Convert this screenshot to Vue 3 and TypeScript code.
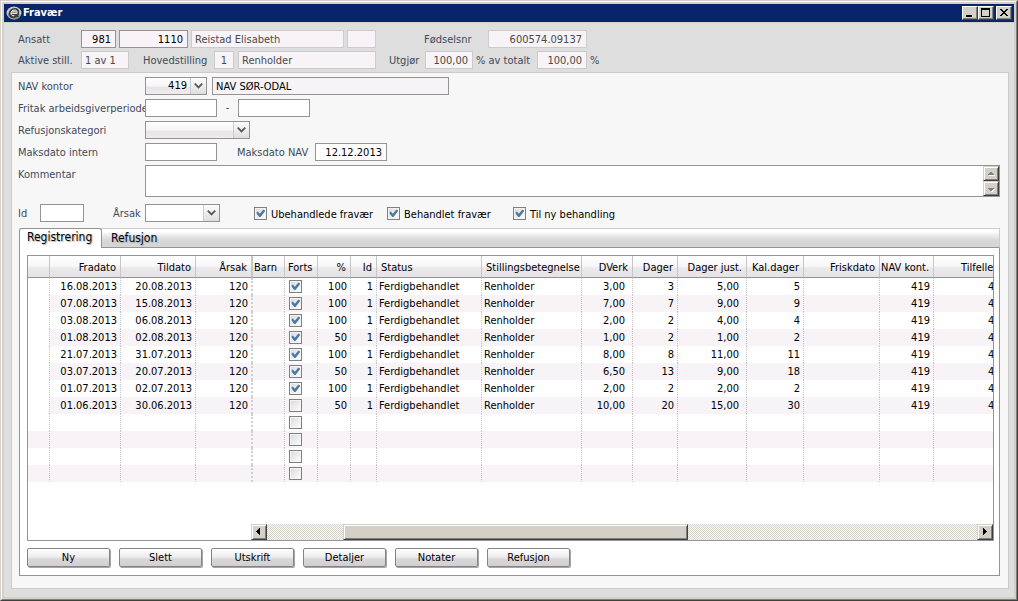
<script setup lang="ts">
import { ref } from 'vue'

interface Column {
  key: string
  label: string
  width: number | null
  kind: string
}

const columns: Column[] = [
  { key: 'mark', label: '', width: 22, kind: 'mark' },
  { key: 'from', label: 'Fradato', width: 71, kind: 'num' },
  { key: 'to', label: 'Tildato', width: 75, kind: 'num' },
  { key: 'cause', label: 'Årsak', width: 57, kind: 'num split' },
  { key: 'child', label: 'Barn', width: 32, kind: 'text tight' },
  { key: 'cont', label: 'Forts', width: 33, kind: 'check' },
  { key: 'pct', label: '%', width: 33, kind: 'num' },
  { key: 'id', label: 'Id', width: 26, kind: 'num' },
  { key: 'status', label: 'Status', width: 105, kind: 'text' },
  { key: 'position', label: 'Stillingsbetegnelse', width: 100, kind: 'text' },
  { key: 'dwork', label: 'DVerk', width: 51, kind: 'num dec' },
  { key: 'days', label: 'Dager', width: 45, kind: 'num' },
  { key: 'adjusted', label: 'Dager just.', width: 69, kind: 'num dec' },
  { key: 'calendar', label: 'Kal.dager', width: 57, kind: 'num' },
  { key: 'well', label: 'Friskdato', width: 76, kind: 'num' },
  { key: 'office', label: 'NAV kont.', width: 54, kind: 'num' },
  { key: 'cases', label: 'Tilfelle', width: null, kind: 'cut' },
]

type Row = Record<string, string>

const source: string[][] = [
  ['16.08.2013', '20.08.2013', 'x', '100', '3,00', '3', '5,00', '5'],
  ['07.08.2013', '15.08.2013', 'x', '100', '7,00', '7', '9,00', '9'],
  ['03.08.2013', '06.08.2013', 'x', '100', '2,00', '2', '4,00', '4'],
  ['01.08.2013', '02.08.2013', 'x', '50', '1,00', '2', '1,00', '2'],
  ['21.07.2013', '31.07.2013', 'x', '100', '8,00', '8', '11,00', '11'],
  ['03.07.2013', '20.07.2013', 'x', '50', '6,50', '13', '9,00', '18'],
  ['01.07.2013', '02.07.2013', 'x', '100', '2,00', '2', '2,00', '2'],
  ['01.06.2013', '30.06.2013', '', '50', '10,00', '20', '15,00', '30'],
]

const filled: Row[] = source.map((r) => ({
  from: r[0], to: r[1], cause: '120', cont: r[2], pct: r[3], id: '1',
  status: 'Ferdigbehandlet', position: 'Renholder',
  dwork: r[4], days: r[5], adjusted: r[6], calendar: r[7],
  office: '419', cases: '4',
}))
const rows = ref<Row[]>([...filled, {}, {}, {}, {}])

const actions = ['Ny', 'Slett', 'Utskrift', 'Detaljer', 'Notater', 'Refusjon']
const filters = ['Ubehandlede fravær', 'Behandlet fravær', 'Til ny behandling']
const tabs = ['Registrering', 'Refusjon']
const activeTab = ref('Registrering')
</script>

<template>
  <div class="window">
    <div class="frame">
      <header class="titlebar">
        <svg class="logo" viewBox="0 0 16 14" aria-hidden="true">
          <ellipse cx="8" cy="7" rx="7.5" ry="6.5" fill="#c9c9c9" />
          <path d="M14.500 8.500C13 12 10 12.800 7.500 12.500C4.500 12.200 2.500 10 2.500 7.500" fill="none" stroke="#8a8a8a" stroke-width="1.2" />
          <path d="M4.600 7.800H11.800C12.800 4.200 10.600 3.200 8.600 3.200C5.600 3.200 4 5.400 4 7.400C4 10 6 10.900 8 10.700C9.800 10.600 11 10.100 12.400 9.400" fill="none" stroke="#3c3c3c" stroke-width="2.6" />
          <path d="M5 7.400H11C11.600 4.800 10 4 8.600 4C6.200 4 5 5.600 5 7.400C5 9.200 6.400 9.900 8 9.800" fill="none" stroke="#f4f4f4" stroke-width="1" />
        </svg>
        <h1>Fravær</h1>
        <div class="winbuttons">
          <button type="button" class="bevel" aria-label="Minimer">
            <svg viewBox="0 0 12 10" shape-rendering="crispEdges"><rect x="2" y="7" width="6" height="2" /></svg>
          </button>
          <button type="button" class="bevel" aria-label="Maksimer">
            <svg viewBox="0 0 12 10" shape-rendering="crispEdges"><path d="M1 0h9v9H1zM2 2v6h7V2z" fill-rule="evenodd" /></svg>
          </button>
          <button type="button" class="bevel close" aria-label="Lukk">
            <svg viewBox="0 0 12 10" shape-rendering="crispEdges"><path d="M2 1h2v1h1v1h2V2h1V1h2v1H9v1H8v1H7v1h1v1h1v1h1v1H8V7H7V6H5v1H4v1H2V7h1V6h1V5h1V4H4V3H3V2H2z" /></svg>
          </button>
        </div>
      </header>

      <main class="body">
        <section class="employee">
          <div class="line">
            <label class="w-label" for="emp">Ansatt</label>
            <input id="emp" class="field own w-35 right" value="981" readonly>
            <input class="field own w-69 right" value="1110" aria-label="Ansattnummer" readonly>
            <input class="field w-153" value="Reistad Elisabeth" aria-label="Navn" readonly>
            <input class="field w-29" value="" aria-label="Kode" readonly>
            <label class="w-birth" for="birth">Fødselsnr</label>
            <input id="birth" class="field w-99 right" value="600574.09137" readonly>
          </div>
          <div class="line">
            <label class="w-label" for="active">Aktive still.</label>
            <input id="active" class="field w-48" value="1 av 1" readonly>
            <label class="w-main" for="main">Hovedstilling</label>
            <input id="main" class="field w-20 center" value="1" readonly>
            <input class="field w-138" value="Renholder" aria-label="Stilling" readonly>
            <label class="w-share" for="share">Utgjør</label>
            <input id="share" class="field w-48 right" value="100,00" readonly>
            <label class="w-total" for="total">% av totalt</label>
            <input id="total" class="field w-50 right" value="100,00" readonly>
            <span class="unit">%</span>
          </div>
        </section>

        <section class="panel">
          <form class="form" @submit.prevent>
            <label for="office">NAV kontor</label>
            <div class="cells">
              <span class="combo w-62 shaded">
                <select id="office" class="right"><option>419</option></select>
                <svg class="arrow" viewBox="0 0 16 16"><path d="M4 5.500L8 9.500L12 5.500" /></svg>
              </span>
              <input class="field own w-237" value="NAV SØR-ODAL" aria-label="NAV kontor navn" readonly>
            </div>

            <label for="exempt">Fritak arbeidsgiverperiode</label>
            <div class="cells">
              <input id="exempt" class="field edit w-72">
              <span class="dash">-</span>
              <input class="field edit w-72" aria-label="Fritak til">
            </div>

            <label for="category">Refusjonskategori</label>
            <div class="cells">
              <span class="combo w-105 shaded">
                <select id="category"><option></option></select>
                <svg class="arrow" viewBox="0 0 16 16"><path d="M4 5.500L8 9.500L12 5.500" /></svg>
              </span>
            </div>

            <label for="maxint">Maksdato intern</label>
            <div class="cells">
              <input id="maxint" class="field edit w-72">
              <label class="w-max" for="maxnav">Maksdato NAV</label>
              <input id="maxnav" class="field edit w-72 right" value="12.12.2013">
            </div>

            <label for="comment">Kommentar</label>
            <div class="comment">
              <textarea id="comment"></textarea>
              <div class="spin">
                <button type="button" class="bevel" aria-label="Rull opp"><svg viewBox="0 0 12 11" shape-rendering="crispEdges"><path d="M5 4h2v1h1v1h1v1H3V6h1V5h1z" fill="#808080" /><path d="M4 7h6v1H4z" fill="#fff" /></svg></button>
                <button type="button" class="bevel" aria-label="Rull ned"><svg viewBox="0 0 12 11" shape-rendering="crispEdges"><path d="M4 6h6v1H9v1H8v1H6V8H5V7H4z" fill="#fff" /><path d="M3 5h6v1H8v1H7v1H5V7H4V6H3z" fill="#808080" /></svg></button>
              </div>
            </div>
          </form>

          <div class="filters">
            <label class="w-id" for="fid">Id</label>
            <input id="fid" class="field edit w-44">
            <label class="w-cause" for="fcause">Årsak</label>
            <span class="combo w-75">
              <select id="fcause"><option></option></select>
              <svg class="arrow" viewBox="0 0 16 16"><path d="M4 5.500L8 9.500L12 5.500" /></svg>
            </span>
            <div class="checks">
              <label v-for="f in filters" :key="f"><input type="checkbox" checked><span>{{ f }}</span></label>
            </div>
          </div>

          <div class="tabbox">
            <div class="tabs" role="tablist">
              <button v-for="t in tabs" :key="t" type="button" role="tab" class="tab"
                :class="{ active: t === activeTab }" :aria-selected="t === activeTab" @click="activeTab = t">{{ t }}</button>
            </div>
            <div class="tabpage">
              <div class="grid">
                <table>
                  <colgroup>
                    <col v-for="c in columns" :key="c.key" :style="c.width ? { width: c.width + 'px' } : {}">
                  </colgroup>
                  <thead>
                    <tr><th v-for="c in columns" :key="c.key" :class="c.kind">{{ c.label }}</th></tr>
                  </thead>
                  <tbody>
                    <tr v-for="(r, i) in rows" :key="i" :class="{ filled: r.from }">
                      <td v-for="c in columns" :key="c.key" :class="c.kind">
                        <input v-if="c.key === 'cont'" type="checkbox" :checked="!!r.cont" :aria-label="'Forts rad ' + (i + 1)">
                        <template v-else>{{ r[c.key] }}</template>
                      </td>
                    </tr>
                  </tbody>
                </table>
                <div class="scroll">
                  <button type="button" class="bevel" aria-label="Rull til venstre"><svg viewBox="0 0 12 12" shape-rendering="crispEdges"><path d="M7 2v7H6V8H5V7H4V6H3V5h1V4h1V3h1V2z" /></svg></button>
                  <div class="track"><div class="thumb bevel"></div></div>
                  <button type="button" class="bevel" aria-label="Rull til høyre"><svg viewBox="0 0 12 12" shape-rendering="crispEdges"><path d="M4 2v7h1V8h1V7h1V6h1V5H7V4H6V3H5V2z" /></svg></button>
                </div>
              </div>
              <div class="actions">
                <button v-for="a in actions" :key="a" type="button">{{ a }}</button>
              </div>
            </div>
          </div>
        </section>
      </main>
    </div>
  </div>
</template>

<style>
body {
  margin: 0;
}
</style>

<style scoped>
* {
  box-sizing: border-box;
}
.window {
  display: flex;
  min-height: 100vh;
  border: 1px solid;
  border-color: #d4d0c8 #404040 #404040 #d4d0c8;
  font: 11px/14px "DejaVu Sans Condensed", "DejaVu Sans", sans-serif;
  color: #424a5a;
  white-space: nowrap;
}
input,
select,
textarea,
button {
  font: inherit;
  margin: 0;
  border-radius: 0;
}
.frame {
  flex: 1;
  min-width: 0;
  display: flex;
  flex-direction: column;
  border: 1px solid;
  border-color: #fff #808080 #808080 #fff;
  padding: 2px;
  background: #d4d0c8;
}
.titlebar {
  display: flex;
  align-items: center;
  height: 18px;
  padding: 0 2px;
  background: #08246b;
}
.logo {
  width: 16px;
  height: 14px;
}
h1 {
  margin: 0 auto 0 1px;
  color: #fff;
  font-size: 11px;
  line-height: 18px;
  font-weight: bold;
}
.winbuttons {
  display: flex;
}
.bevel {
  display: block;
  padding: 0;
  background: #d4d0c8;
  border: 1px solid;
  border-color: #d4d0c8 #404040 #404040 #d4d0c8;
  box-shadow: inset 1px 1px #fff, inset -1px -1px #808080;
}
.bevel svg {
  display: block;
  margin: auto;
}
.winbuttons .bevel {
  width: 16px;
  height: 14px;
  border-color: #fff #404040 #404040 #fff;
  box-shadow: inset -1px -1px #808080;
}
.winbuttons svg {
  width: 12px;
  height: 10px;
}
.winbuttons .close {
  margin-left: 2px;
}
.body {
  flex: 1;
  display: flex;
  flex-direction: column;
  margin-top: 1px;
  padding: 7px 5px 8px 7px;
  background: #dedede;
}
.employee {
  display: flex;
  flex-direction: column;
  gap: 3px;
  padding: 0 0 3px 7px;
}
.line {
  display: flex;
  align-items: center;
  gap: 3px;
}
.line label,
.line .unit,
.filters > label {
  height: 14px;
  line-height: 16px;
}
.field {
  height: 18px;
  padding: 0 4px 0 3px;
  border: 1px solid #ccc;
  background: #f7f3f7;
  color: #4a4a4a;
  outline: none;
}
.own {
  border-color: #949494;
  color: #000;
}
.edit {
  border-color: #949494;
  background: #fff;
  color: #000;
}
.right {
  text-align: right;
}
.center {
  padding: 0;
  text-align: center;
}
.w-label { width: 60px; }
.w-20 { width: 20px; margin-right: 1px; }
.w-29 { width: 29px; }
.w-35 { width: 35px; }
.w-44 { width: 44px; }
.w-48 { width: 48px; }
.w-50 { width: 50px; }
.w-62 { width: 62px; }
.w-69 { width: 69px; }
.w-72 { width: 72px; }
.w-75 { width: 75px; }
.w-99 { width: 99px; }
.w-105 { width: 105px; }
.w-138 { width: 138px; }
.w-153 { width: 153px; }
.w-237 { width: 237px; }
.w-birth { width: 106px; padding-left: 45px; }
.w-main { width: 79px; padding-left: 11px; }
.w-share { width: 43px; padding-left: 10px; }
.w-total { width: 58px; }
.w-max { width: 98px; padding-left: 20px; }
.w-id { width: 22px; }
.w-cause { width: 61px; padding-left: 29px; }
.panel {
  flex: 1;
  display: flex;
  flex-direction: column;
  padding: 4px 8px 12px 6px;
  border: 1px solid #ccc;
  background: #f7f7f7;
}
.form {
  display: grid;
  grid-template-columns: 127px 1fr;
  row-gap: 4px;
}
.form label {
  height: 18px;
  line-height: 20px;
}
.cells,
.filters {
  display: flex;
  align-items: center;
}
.cells .combo {
  margin-right: 5px;
}
.dash {
  width: 21px;
  text-align: center;
}
.combo {
  position: relative;
  display: inline-block;
  height: 18px;
}
.combo select {
  appearance: none;
  display: block;
  width: 100%;
  height: 18px;
  padding: 0 19px 0 3px;
  border: 1px solid #949494;
  background: #fff;
  color: #000;
}
.combo select.right {
  text-align-last: right;
}
.combo.shaded select {
  background: linear-gradient(#fff 0, #f7f4f7 50%, #e8e4e8 60%, #efebef 100%);
}
.arrow {
  position: absolute;
  top: 1px;
  right: 1px;
  width: 16px;
  height: 16px;
  border-left: 1px solid #ccc;
  background: linear-gradient(#fdfdfd, #dedede);
  fill: none;
  stroke: #5a5a5a;
  stroke-width: 2;
  pointer-events: none;
}
.comment {
  display: flex;
  height: 32px;
  border: 1px solid #949494;
  background: #fff;
}
.comment textarea {
  flex: 1;
  padding: 2px 3px;
  border: 0;
  outline: none;
  resize: none;
  background: #fff;
}
.spin .bevel {
  width: 16px;
  height: 15px;
}
.spin svg {
  width: 12px;
  height: 11px;
}
.filters {
  padding: 7px 0 6px;
}
.checks {
  display: flex;
  padding-left: 34px;
  color: #000;
}
.checks label {
  display: flex;
  align-items: center;
  gap: 4px;
  padding-top: 1px;
  width: 133px;
}
.checks label + label {
  width: 126px;
}
.checks span {
  height: 14px;
  line-height: 16px;
}
input[type="checkbox"] {
  appearance: none;
  display: block;
  width: 13px;
  height: 13px;
  border: 1px solid #808080;
  background: linear-gradient(135deg, #d9d9d9, #fff);
  box-shadow: inset 0 0 0 1px #f4f4f4;
}
input[type="checkbox"]:checked::after {
  content: "";
  display: block;
  width: 9px;
  height: 9px;
  margin: 1px;
  background: #4a7ba5;
  clip-path: polygon(8% 30%, 24% 30%, 42% 52%, 80% 8%, 98% 12%, 98% 28%, 50% 88%, 36% 88%, 8% 52%);
}
.tabbox {
  flex: 1;
  display: flex;
  flex-direction: column;
  margin-left: 1px;
}
.tabs {
  display: flex;
  height: 20px;
  border: 1px solid #ccc;
  border-left: 0;
  border-bottom-color: #949494;
  background: linear-gradient(#fff 0, #fff 3px, #f3f0f3 5px, #d6d6d6 12px, #d6d6d6 100%);
}
.tab {
  height: 19px;
  margin-top: -1px;
  padding: 0 9px;
  border: 0;
  background: none;
  color: #000;
  font-size: 12px;
  line-height: 18px;
  text-shadow: 1px 1px 1px #aaa;
}
.tab.active {
  width: 83px;
  height: 20px;
  padding: 0 7px 2px;
  border: 1px solid #949494;
  border-bottom: 0;
  border-radius: 3px 3px 0 0;
  background: #fff;
  line-height: 17px;
  text-align: left;
}
.tabpage {
  flex: 1;
  display: flex;
  flex-direction: column;
  gap: 7px;
  padding: 7px 5px 7px 7px;
  border: 1px solid #949494;
  border-top: 0;
  background: #fff;
}
.grid {
  flex: 1;
  display: flex;
  flex-direction: column;
  border: 1px solid #949494;
  overflow: hidden;
}
table {
  width: 100%;
  table-layout: fixed;
  border-collapse: separate;
  border-spacing: 0;
  color: #000;
}
th,
td {
  padding: 1px 3px 0 2px;
  overflow: hidden;
  text-align: left;
  font-weight: normal;
}
th {
  height: 22px;
  padding: 2px 4px 0;
  border-right: 1px solid #c6c6c6;
  border-bottom: 1px solid #949494;
  background: linear-gradient(#fff 0, #f9f7f9 45%, #ebe8eb 60%, #e6e3e6 100%);
}
td {
  height: 17px;
  border-right: 1px dotted #c6c6c6;
}
.num {
  text-align: right;
}
th.num,
th.tight {
  padding-left: 1px;
}
td.dec {
  padding-right: 7px;
}
.split {
  border-right-width: 2px;
}
td.split {
  border-right-color: #d0d0d0;
}
td.check {
  padding: 0 4px;
}
th.check {
  padding-left: 3px;
  padding-right: 2px;
}
th.cut {
  padding-left: 27px;
  padding-right: 0;
  border-right: 0;
}
td.cut {
  padding-left: 54px;
  padding-right: 0;
  border-right: 0;
}
tbody tr:nth-child(even) td {
  background: #f7f3f7;
}
tbody tr.filled td.mark {
  background: #fff;
}
.scroll {
  display: flex;
  margin: auto 0 0 223px;
}
.scroll .bevel {
  width: 16px;
  height: 16px;
}
.scroll svg {
  width: 12px;
  height: 12px;
}
.track {
  flex: 1;
  background: repeating-conic-gradient(#d4d0c8 0 25%, #fff 0 50%) 0 0 / 2px 2px;
}
.track .thumb {
  width: 345px;
  margin-left: 76px;
}
.actions {
  display: flex;
  gap: 9px;
  padding-bottom: 1px;
}
.actions button {
  width: 83px;
  height: 19px;
  padding: 1px 0 0;
  border: 1px solid #848484;
  border-radius: 2px;
  background: linear-gradient(#fff 0, #efedef 45%, #dad7da 60%, #d2cfd2 100%);
  box-shadow: 1px 1px #a5a5a5;
  color: #000;
}
</style>
